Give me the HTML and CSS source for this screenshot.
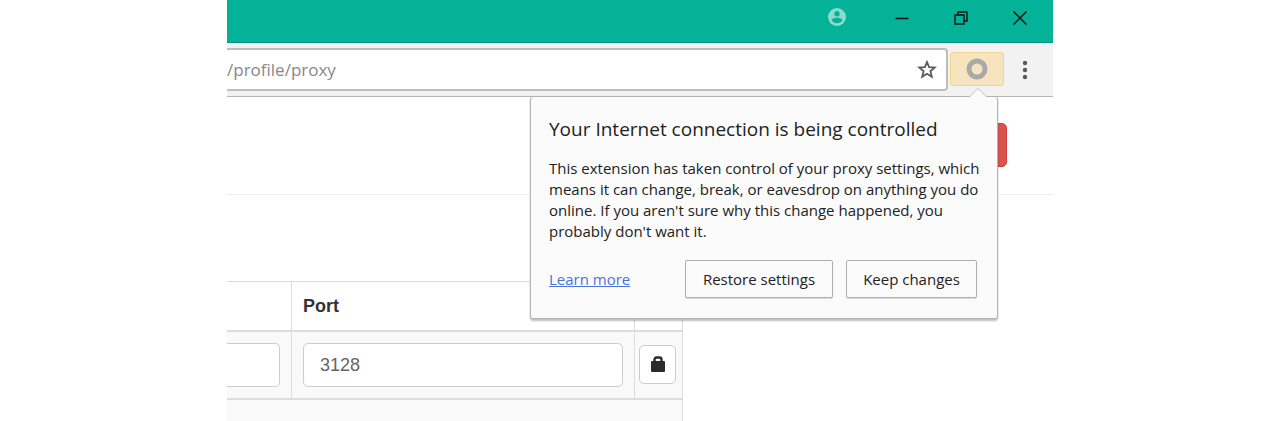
FILE: index.html
```
<!DOCTYPE html>
<html lang="en">
<head>
    <meta charset="UTF-8">
    <meta name="viewport" content="width=device-width, initial-scale=1.0">
    <title>Proxy profile</title>
    <link rel="stylesheet" href="styles.css">
</head>
<body>
    <div class="window">
        <header class="titlebar">
            <button class="win-btn" aria-label="Profile">
                <svg width="18" height="18" viewBox="0 0 18 18">
                    <circle cx="9" cy="9" r="9" fill="#8edbcb"/>
                    <circle cx="9" cy="5.8" r="2.7" fill="#04b397"/>
                    <path d="M3.5 12C4.500 10.300 7 9.800 9 9.800s4.500.5 5.500 2.200C13.300 14.100 11.300 15.300 9 15.300S4.700 14.100 3.500 12z" fill="#04b397"/>
                </svg>
            </button>
            <button class="win-btn" aria-label="Minimize">
                <svg width="14" height="14" viewBox="0 0 14 14">
                    <path d="M0.500 7.500h13" stroke="#111" stroke-width="1.500"/>
                </svg>
            </button>
            <button class="win-btn" aria-label="Restore">
                <svg width="14" height="14" viewBox="0 0 14 14" fill="none" stroke="#111" stroke-width="1.400">
                    <path d="M1 4h9v9H1zM4 4V1h9v9h-3"/>
                </svg>
            </button>
            <button class="win-btn" aria-label="Close">
                <svg width="14" height="14" viewBox="0 0 14 14">
                    <path d="M0.500 0.500l13 13M13.500 0.500l-13 13" stroke="#111" stroke-width="1.500"/>
                </svg>
            </button>
        </header>

        <div class="toolbar">
            <div class="address">
                <input class="address-input" type="text" value="/profile/proxy" aria-label="Address">
                <button class="star" aria-label="Bookmark this page">
                    <svg width="20" height="20" viewBox="0 0 20 20">
                        <path d="M10 2l2.100 5.200 5.600.4-4.300 3.600 1.400 5.500L10 13.700l-4.800 3 1.400-5.500L2.300 7.600l5.600-.4z" fill="none" stroke="#5a5a5a" stroke-width="1.800"/>
                    </svg>
                </button>
            </div>
            <div class="extension">
                <button class="extension-btn" aria-label="Proxy extension">
                    <svg width="22" height="22" viewBox="0 0 22 22">
                        <circle cx="11" cy="11" r="8" fill="none" stroke="#a9a9a9" stroke-width="5"/>
                    </svg>
                </button>
                <div class="popup" role="dialog" aria-labelledby="popup-title">
                    <svg class="popup-arrow" width="18" height="10" viewBox="0 0 18 10">
                        <path d="M0 9.500L9 0.800l9 8.700V10H0z" fill="#fbfbfb"/>
                        <path d="M0.500 8.500L9 0.500l8.500 8" fill="none" stroke="#c4c4c4"/>
                    </svg>
                    <h1 class="popup-title" id="popup-title">Your Internet connection is being controlled</h1>
                    <p class="popup-text">This extension has taken control of your proxy settings, which means it can change, break, or eavesdrop on anything you do online. If you aren't sure why this change happened, you probably don't want it.</p>
                    <div class="popup-actions">
                        <a class="learn-more" href="#">Learn more</a>
                        <button class="popup-btn restore">Restore settings</button>
                        <button class="popup-btn keep">Keep changes</button>
                    </div>
                </div>
            </div>
            <button class="menu" aria-label="Menu">
                <svg width="6" height="20" viewBox="0 0 6 20" fill="#5a5a5a">
                    <circle cx="3" cy="3" r="2.200"/>
                    <circle cx="3" cy="10" r="2.200"/>
                    <circle cx="3" cy="17" r="2.200"/>
                </svg>
            </button>
        </div>

        <main class="page">
            <div class="page-header">
                <button class="delete" aria-label="Delete"></button>
            </div>
            <table class="servers">
                <thead>
                    <tr>
                        <th class="col-server"></th>
                        <th>Port</th>
                        <th class="col-lock"></th>
                    </tr>
                </thead>
                <tbody>
                    <tr>
                        <td class="col-server"><input class="field field-server" type="text" aria-label="Server"></td>
                        <td><input class="field" type="text" value="3128" aria-label="Port"></td>
                        <td class="col-lock">
                            <button class="lock" aria-label="Authentication">
                                <svg width="16" height="18" viewBox="0 0 16 18">
                                    <path d="M4.500 7V4.500a2 2 0 0 1 2-2h3a2 2 0 0 1 2 2V7" fill="none" stroke="#2b2b2b" stroke-width="2.400"/>
                                    <rect x="1" y="6" width="14" height="11" rx="1" fill="#2b2b2b"/>
                                </svg>
                            </button>
                        </td>
                    </tr>
                    <tr>
                        <td colspan="3"></td>
                    </tr>
                </tbody>
            </table>
        </main>
    </div>
</body>
</html>
```
FILE: styles.css
```
* {
    box-sizing: border-box;
}
body {
    margin: 0;
    background: #fff;
    font-family: "Liberation Sans", Arial, sans-serif;
    font-size: 18px;
    color: #333;
}
button {
    padding: 0;
    border: none;
    background: none;
    cursor: pointer;
}
svg {
    display: block;
}
.window {
    height: 100vh;
    margin: 0 227px;
    overflow: hidden;
}

/* title bar */
.titlebar {
    display: flex;
    justify-content: flex-end;
    height: 43px;
    padding: 0 4px 6px 0;
    background: #04b397;
    border-bottom: 1px solid #0a9580;
}
.win-btn {
    display: flex;
    align-items: center;
    justify-content: center;
    width: 59px;
}
.win-btn:first-child {
    width: 70px;
    padding-bottom: 2px;
}

/* toolbar */
.toolbar {
    display: flex;
    align-items: flex-start;
    height: 54px;
    padding-top: 5px;
    background: #f2f2f2;
    border-bottom: 1px solid #b8b8b8;
}
.address {
    display: flex;
    flex: 1;
    align-items: center;
    height: 43px;
    padding-right: 9px;
    background: #fff;
    border: 2px solid #bdbdbd;
    border-left: none;
    border-radius: 0 4px 4px 0;
}
.address-input {
    flex: 1;
    min-width: 0;
    padding: 0;
    border: none;
    outline: none;
    font-family: "Open Sans", "Noto Sans", sans-serif;
    font-size: 17px;
    color: #888;
}
.extension {
    position: relative;
    margin: 4px 0 0 2px;
}
.extension-btn {
    display: flex;
    align-items: center;
    justify-content: center;
    width: 54px;
    height: 34px;
    background: #f5e4bd;
    border: 1px solid #f3d58e;
    border-radius: 3px;
}
.menu {
    margin: 12px 25px 0 18px;
}

/* popup */
.popup {
    position: absolute;
    top: 44px;
    right: 6px;
    z-index: 1;
    width: 468px;
    padding: 20px 20px 20px 18px;
    background: #fbfbfb;
    border: 1px solid #b4b4b4;
    border-radius: 3px;
    box-shadow: 0 2px 2px rgba(0, 0, 0, 0.25);
    font-family: "Open Sans", "Noto Sans", sans-serif;
    color: #222;
}
.popup-arrow {
    position: absolute;
    top: -9px;
    right: 10px;
}
.popup-title {
    margin: 0;
    font-size: 19px;
    font-weight: normal;
    line-height: 24px;
}
.popup-text {
    margin: 17px -12px 18px 0;
    font-size: 15px;
    line-height: 21px;
}
.popup-actions {
    display: flex;
    align-items: center;
}
.learn-more {
    margin-right: auto;
    font-size: 15px;
    color: #4a73dc;
}
.popup-btn {
    height: 38px;
    background: #fbfbfb;
    border: 1px solid #b0b0b0;
    border-radius: 2px;
    box-shadow: 0 1px 1px rgba(0, 0, 0, 0.15);
    font-family: inherit;
    font-size: 15px;
    color: #222;
}
.restore {
    width: 148px;
}
.keep {
    width: 131px;
    margin-left: 13px;
}

/* page */
.page-header {
    display: flex;
    justify-content: flex-end;
    padding: 26px 46px 27px 0;
    border-bottom: 1px solid #eee;
}
.delete {
    width: 100px;
    height: 44px;
    background: #d9534f;
    border: 1px solid #d43f3a;
    border-radius: 5px;
}
.servers {
    width: 456px;
    margin-top: 86px;
    border-collapse: separate;
    border-spacing: 0;
    table-layout: fixed;
    border-top: 1px solid #ddd;
    border-right: 1px solid #ddd;
}
.servers th {
    height: 50px;
    padding: 0 11px;
    text-align: left;
    border-bottom: 2px solid #ddd;
}
.servers td {
    height: 68px;
    padding: 0 11px;
    background: #f9f9f9;
    border-bottom: 2px solid #ddd;
}
.servers th + th,
.servers td + td {
    border-left: 1px solid #ddd;
}
.servers .col-server {
    width: 64px;
    padding-left: 0;
}
.servers .col-lock {
    width: 48px;
    padding: 0 4px 2px;
}
.servers td:nth-child(2) {
    padding-right: 11px;
}
.field {
    display: block;
    width: 100%;
    height: 44px;
    padding: 0 16px;
    background: #fff;
    border: 1px solid #ccc;
    border-radius: 5px;
    font-family: inherit;
    font-size: 18px;
    color: #666;
}
.field-server {
    border-left: none;
    border-radius: 0 5px 5px 0;
}
.lock {
    display: flex;
    align-items: center;
    justify-content: center;
    width: 37px;
    height: 39px;
    background: #fff;
    border: 1px solid #ccc;
    border-radius: 5px;
}
```
